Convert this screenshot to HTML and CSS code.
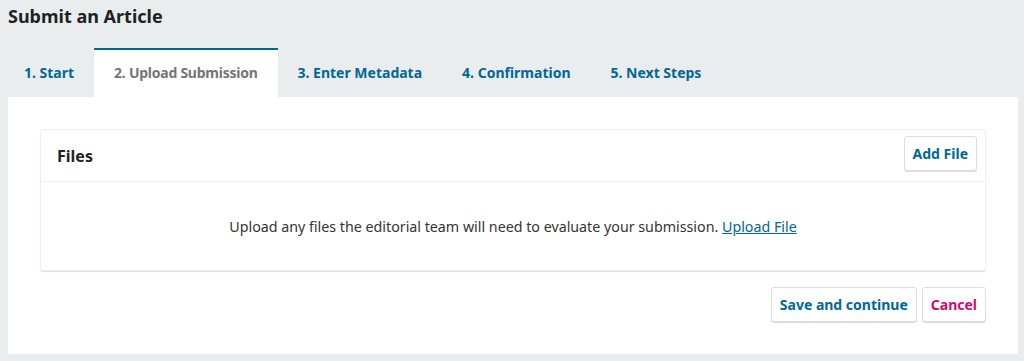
FILE: index.html
```html
<!DOCTYPE html>
<html lang="en">
<head>
  <meta charset="UTF-8">
  <title>Submit an Article</title>
  <link rel="stylesheet" href="styles.css">
</head>
<body>
  <h1 class="page-title">Submit an Article</h1>
  <ul class="tabs">
    <li class="tab">1. Start</li>
    <li class="tab active">2. Upload Submission</li>
    <li class="tab">3. Enter Metadata</li>
    <li class="tab">4. Confirmation</li>
    <li class="tab">5. Next Steps</li>
  </ul>
  <div class="panel">
    <div class="card">
      <div class="card-header">
        <span class="card-title">Files</span>
        <button class="btn">Add File</button>
      </div>
      <div class="card-body">
        Upload any files the editorial team will need to evaluate your submission. <a href="#">Upload File</a>
      </div>
    </div>
    <div class="actions">
      <button class="btn">Save and continue</button>
      <button class="btn cancel">Cancel</button>
    </div>
  </div>
</body>
</html>
```

FILE: styles.css
```css
body {
  font-family: 'Noto Sans', sans-serif;
  margin: 0;
  padding: 0 6px 7px 8px;
  background-color: #eaedee;
  color: #222;
}
.page-title {
  font-size: 18px;
  font-weight: bold;
  margin: 0;
  padding-top: 4px;
  line-height: 24px;
}
.tabs {
  display: flex;
  list-style: none;
  margin: 20px 0 0 -4px;
  padding: 0;
}
.tab {
  padding: 0 20px;
  height: 47px;
  line-height: 46px;
  font-size: 14px;
  font-weight: bold;
  color: #006798;
  border-top: 2px solid transparent;
}
.tab.active {
  background: white;
  color: #757575;
  letter-spacing: -0.25px;
  border-top-color: #006798;
}
.panel {
  background: white;
  padding: 32px;
}
.card {
  border: 1px solid #eee;
  border-radius: 3px;
  box-shadow: 0 1px 1px #ddd;
}
.card-header {
  display: flex;
  justify-content: space-between;
  align-items: flex-start;
  padding: 6px 8px 0 16px;
  height: 45px;
  border-bottom: 1px solid #f0f0f0;
}
.card-title {
  font-size: 16px;
  font-weight: bold;
  line-height: 40px;
}
.card-body {
  text-align: center;
  font-size: 14.25px;
  padding: 35px 16px 33px;
  line-height: 20px;
  color: #333;
}
.card-body a {
  color: #006798;
}
.btn {
  font-family: inherit;
  font-size: 14px;
  font-weight: bold;
  color: #006798;
  background: white;
  border: 1px solid #ddd;
  border-radius: 3px;
  box-shadow: 0 1px 0 #ddd;
  padding: 0 8px;
  height: 35px;
}
.btn.cancel {
  color: #d00a6c;
}
.actions {
  display: flex;
  justify-content: flex-end;
  gap: 5px;
  margin-top: 16px;
}
```
